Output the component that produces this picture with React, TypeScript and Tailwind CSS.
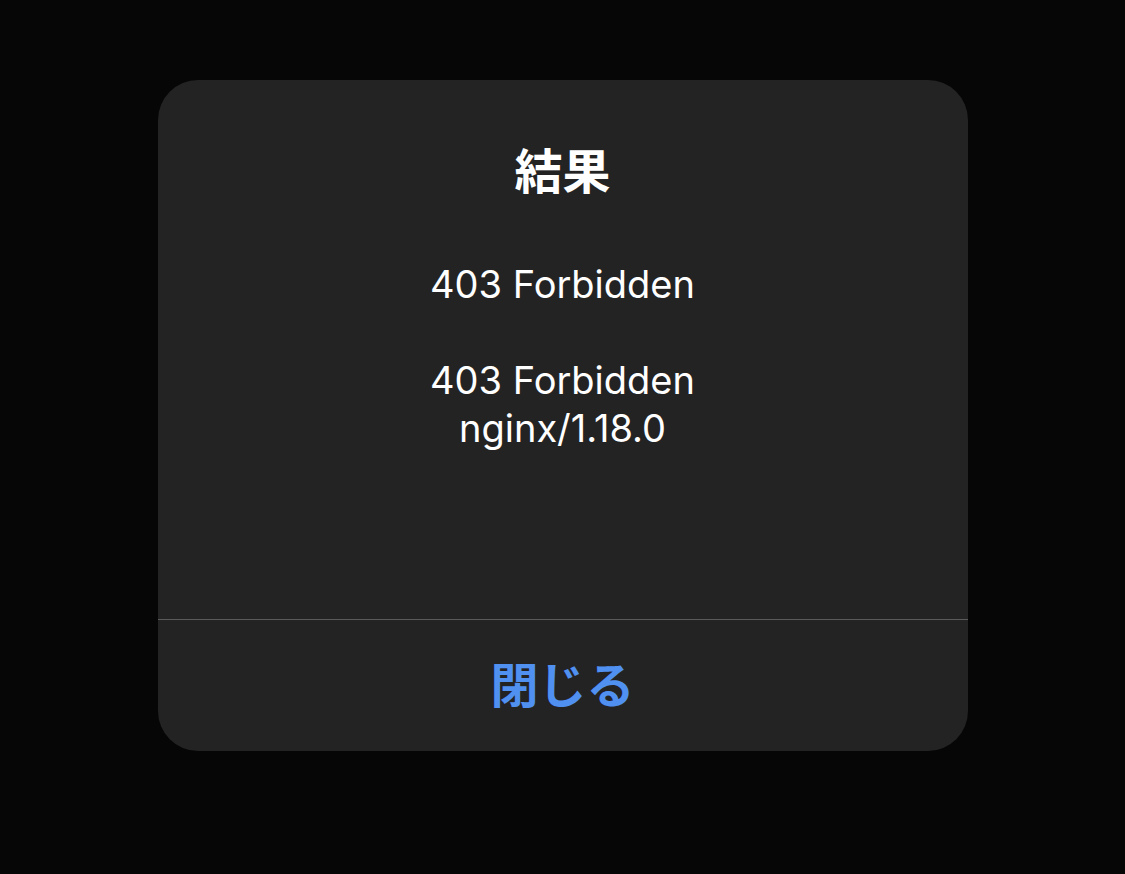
export default function App() {
  return (
    <div className="min-h-screen w-full bg-[#060606] flex justify-center pt-[80px] antialiased">
      <div
        className="w-[810px] h-[671px] bg-[#232323] rounded-[40px] flex flex-col overflow-hidden"
        style={{ fontFamily: '"Inter", "Noto Sans CJK JP", sans-serif' }}
      >
        <div className="h-[539px] flex flex-col items-center pt-[63px]">
          <h1 className="text-[48px] leading-[58px] font-bold text-white">結果</h1>
          <p className="mt-[59px] text-[38px] leading-[48px] text-white text-center whitespace-pre-line">
            {"403 Forbidden\n\n403 Forbidden\nnginx/1.18.0"}
          </p>
        </div>
        <div className="h-px bg-[#5a5a5a]" />
        <button className="flex-1 flex items-center justify-center text-[48px] font-semibold text-[#5090f0]">
          閉じる
        </button>
      </div>
    </div>
  );
}
